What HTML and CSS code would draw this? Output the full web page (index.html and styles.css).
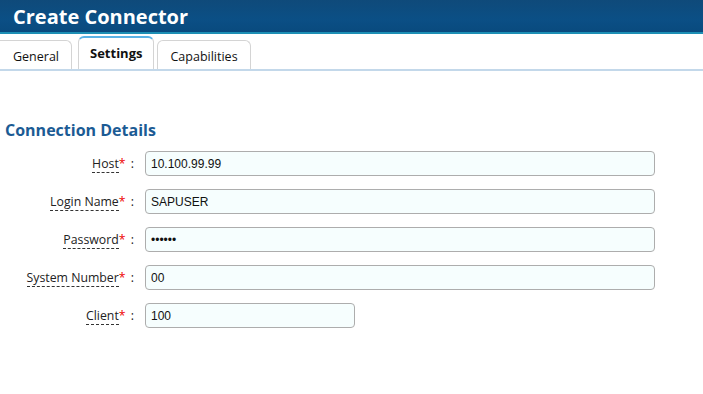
FILE: index.html
```html
<!DOCTYPE html>
<html lang="en">
<head>
  <meta charset="UTF-8" />
  <title>Create Connector</title>
  <link rel="stylesheet" href="styles.css">
</head>
<body>
  <header class="title-bar">
    <h1>Create Connector</h1>
  </header>

  <nav class="tabs">
    <a class="tab">General</a>
    <a class="tab active">Settings</a>
    <a class="tab">Capabilities</a>
  </nav>

  <section class="panel">
    <h2>Connection Details</h2>
    <div class="form">
      <div class="row">
        <label><span class="name">Host</span><span class="req">*</span> :</label>
        <input class="field" type="text" value="10.100.99.99">
      </div>
      <div class="row">
        <label><span class="name">Login Name</span><span class="req">*</span> :</label>
        <input class="field" type="text" value="SAPUSER">
      </div>
      <div class="row">
        <label><span class="name">Password</span><span class="req">*</span> :</label>
        <input class="field" type="password" value="secret">
      </div>
      <div class="row">
        <label><span class="name">System Number</span><span class="req">*</span> :</label>
        <input class="field" type="text" value="00">
      </div>
      <div class="row">
        <label><span class="name">Client</span><span class="req">*</span> :</label>
        <input class="field short" type="text" value="100">
      </div>
    </div>
  </section>
</body>
</html>
```

FILE: styles.css
```css
body, h1, h2, label, input {
  margin: 0;
  padding: 0;
}

body {
  font-family: 'Open Sans', sans-serif;
  background-color: white;
  color: #222;
}

.title-bar {
  height: 32px;
  background: linear-gradient(#0f4a7a, #0b4f85 60%, #094a7e);
  border-bottom: 2px solid #1d8fb5;
  display: flex;
  align-items: center;
  padding-left: 13px;
}

.title-bar h1 {
  font-size: 20px;
  font-weight: 700;
  color: white;
}

.tabs {
  display: flex;
  align-items: flex-end;
  height: 34px;
  margin-top: 1px;
  padding-left: 0;
  border-bottom: 2px solid #c3d8ea;
}

.tab {
  font-size: 12.5px;
  color: #111;
  height: 28px;
  line-height: 32px;
  padding: 0 12px;
  margin-right: 6px;
  border: 1px solid #d4d4d4;
  border-bottom: none;
  border-radius: 6px 6px 0 0;
  background-color: white;
}

.tab:first-child {
  border-left: none;
  border-top-left-radius: 0;
  padding-left: 13px;
}

.tab.active {
  font-size: 13px;
  font-weight: 700;
  height: 31px;
  line-height: 31px;
  padding: 0 11px;
  border-top: 2px solid #5ab3e6;
  margin-right: 3px;
}

.panel {
  padding: 48px 0 0 5px;
}

.panel h2 {
  font-size: 16px;
  font-weight: 700;
  color: #1b5b94;
  margin-bottom: 10px;
}

.form {
  display: flex;
  flex-direction: column;
  gap: 13px;
}

.row {
  display: flex;
  align-items: center;
}

.row label {
  width: 129px;
  text-align: right;
  font-size: 12.3px;
  color: #222;
  margin-right: 11px;
  white-space: nowrap;
}

.name {
  border-bottom: 1px dashed #333;
}

.req {
  color: #e00;
  margin-right: 2px;
}

.field {
  width: 510px;
  height: 25px;
  box-sizing: border-box;
  border: 1px solid #adadad;
  border-radius: 4px;
  background-color: #f6fefe;
  font-family: 'Liberation Sans', sans-serif;
  font-size: 12px;
  color: #111;
  padding: 0 5px;
}

.field.short {
  width: 210px;
}
```
